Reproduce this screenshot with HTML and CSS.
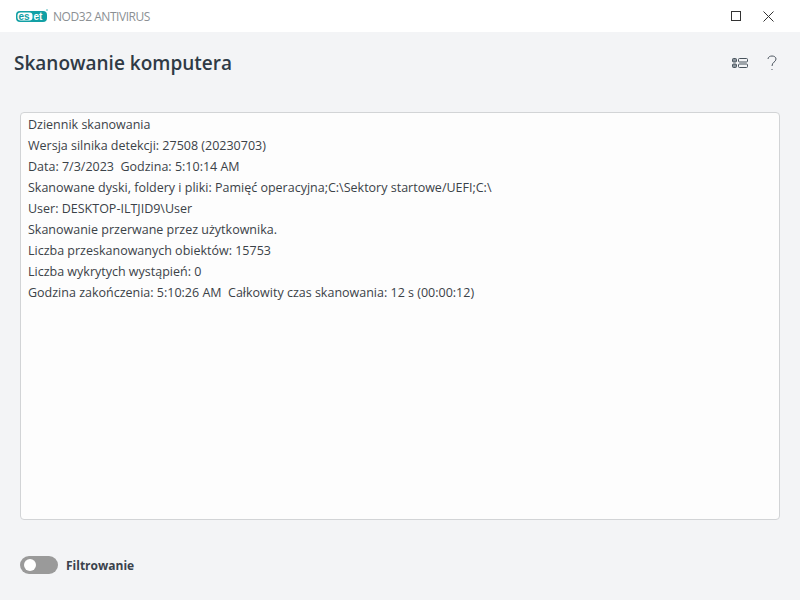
FILE: index.html
```html
<!DOCTYPE html>
<html lang="pl">

<head>
    <meta charset="UTF-8">
    <meta name="viewport" content="width=device-width, initial-scale=1.0">
    <title>ESET NOD32 Antivirus</title>
    <link rel="stylesheet" href="styles.css">
</head>

<body>
    <div class="titlebar">
        <div class="brand">
            <svg class="logo" width="32" height="14" viewBox="0 0 32 14">
                <rect x="0" y="2" width="31" height="11" rx="4" fill="#12a0a5" />
                <rect x="1.5" y="3.5" width="15" height="8" rx="3" fill="#fff" />
                <text x="2.5" y="10.6" class="logo-dark">es</text>
                <text x="17.5" y="10.6" class="logo-light">et</text>
                <circle cx="31" cy="1" r="0.7" fill="#12a0a5" />
            </svg>
            <span class="product">NOD32 ANTIVIRUS</span>
        </div>
        <div class="window-btns">
            <svg width="11" height="11" viewBox="0 0 11 11">
                <rect x="0.5" y="0.5" width="9" height="9" fill="none" stroke="#333" />
            </svg>
            <svg width="11" height="11" viewBox="0 0 11 11">
                <path d="M0.5 0.5L10.5 10.5M10.5 0.5L0.5 10.5" fill="none" stroke="#333" />
            </svg>
        </div>
    </div>

    <div class="main">
        <div class="header">
            <h1>Skanowanie komputera</h1>
            <div class="header-tools">
                <svg width="16" height="12" viewBox="0 0 16 12">
                    <rect x="0.5" y="1.5" width="4" height="3.5" rx="1" fill="#8a939b" stroke="#47525c" />
                    <rect x="0.5" y="7" width="4" height="3.5" rx="1" fill="#8a939b" stroke="#47525c" />
                    <rect x="6.5" y="1.5" width="9" height="3.5" rx="1" fill="none" stroke="#47525c" />
                    <rect x="6.5" y="7" width="9" height="3.5" rx="1" fill="none" stroke="#47525c" />
                </svg>
                <svg width="10" height="16" viewBox="0 0 10 16">
                    <path d="M1 4C1 2 3 1 5 1C7 1 9 2 9 4C9 7 5 7 5 11" fill="none" stroke="#4d5660" />
                    <rect x="4.5" y="14" width="1" height="1" fill="#4d5660" />
                </svg>
            </div>
        </div>

        <div class="log">
            <div>Dziennik skanowania</div>
            <div>Wersja silnika detekcji: 27508 (20230703)</div>
            <div>Data: 7/3/2023&nbsp; Godzina: 5:10:14 AM</div>
            <div>Skanowane dyski, foldery i pliki: Pamięć operacyjna;C:\Sektory startowe/UEFI;C:\</div>
            <div>User: DESKTOP-ILTJID9\User</div>
            <div>Skanowanie przerwane przez użytkownika.</div>
            <div>Liczba przeskanowanych obiektów: 15753</div>
            <div>Liczba wykrytych wystąpień: 0</div>
            <div>Godzina zakończenia: 5:10:26 AM&nbsp; Całkowity czas skanowania: 12 s (00:00:12)</div>
        </div>

        <div class="filter">
            <span class="toggle"><span class="knob"></span></span>
            <span class="filter-label">Filtrowanie</span>
        </div>
    </div>
</body>

</html>
```

FILE: styles.css
```css
* {
    margin: 0;
    padding: 0;
    box-sizing: border-box
}

body {
    font-family: "Open Sans", "Noto Sans", sans-serif;
    width: 800px;
    height: 600px;
    overflow: hidden;
    background: #f3f4f6;
    color: #333b42
}

.titlebar {
    height: 32px;
    background: #fff;
    display: flex;
    align-items: center;
    justify-content: space-between;
    padding: 0 26px 0 16px
}

.brand {
    display: flex;
    align-items: center;
    gap: 5px
}

.logo-dark,
.logo-light {
    font-family: "Liberation Sans", sans-serif;
    font-size: 10px;
    font-weight: 700
}

.logo-dark {
    fill: #12a0a5
}

.logo-light {
    fill: #fff
}

.product {
    font-size: 12px;
    letter-spacing: -.45px;
    color: #8b8f93
}

.window-btns {
    display: flex;
    align-items: center;
    gap: 21px
}

.main {
    padding: 0 20px
}

.header {
    height: 62px;
    display: flex;
    align-items: center;
    justify-content: space-between;
    padding-right: 3px;
    margin-left: -6px
}

.header h1 {
    font-size: 19px;
    font-weight: 600;
    color: #2f3a45
}

.header-tools {
    display: flex;
    align-items: center;
    gap: 19px
}

.log {
    margin-top: 18px;
    height: 408px;
    background: #fdfdfd;
    border: 1px solid #d2d4d6;
    border-radius: 4px;
    padding: 1px 7px;
    font-size: 12.5px;
    line-height: 21px;
    color: #3b4248
}

.filter {
    margin-top: 36px;
    display: flex;
    align-items: center;
    gap: 8px
}

.toggle {
    width: 38px;
    height: 18px;
    border-radius: 9px;
    background: #9a9a9a;
    display: flex;
    align-items: center;
    padding-left: 4px
}

.knob {
    width: 12px;
    height: 12px;
    border-radius: 50%;
    background: #fff
}

.filter-label {
    font-size: 12px;
    font-weight: 700;
    color: #3a424b
}
```
